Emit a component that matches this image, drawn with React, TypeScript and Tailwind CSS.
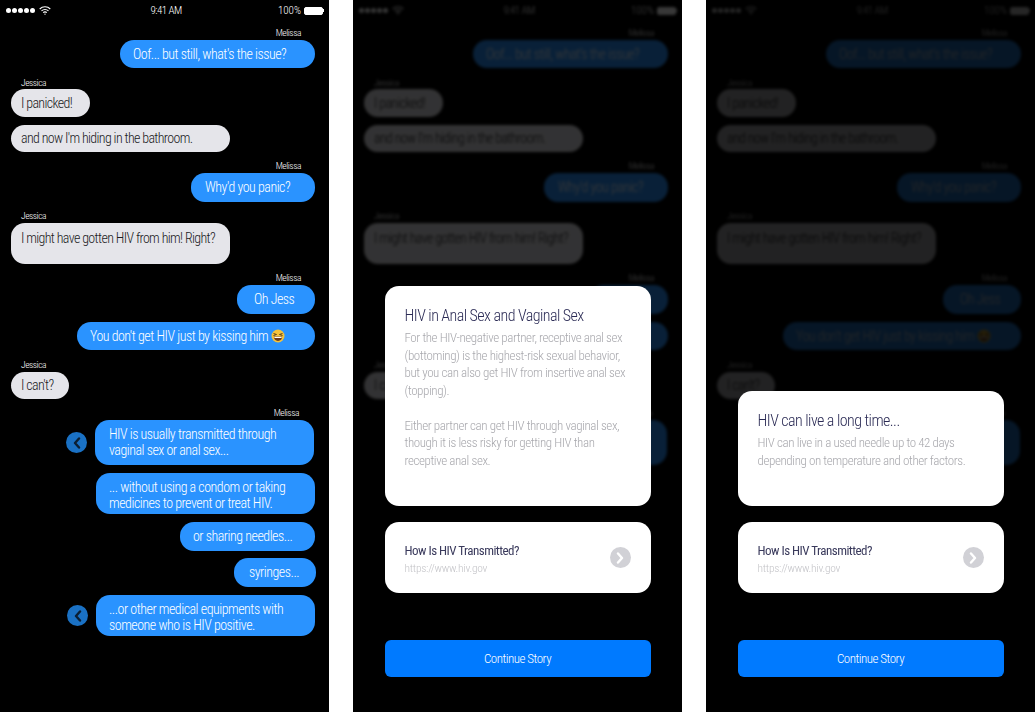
import React from "react";

const font = "font-['Liberation_Sans_Narrow','Roboto_Condensed','Liberation_Sans',sans-serif]";

function Laugh() {
  return (
    <svg width="14" height="14" viewBox="0 0 14 14" className="inline-block ml-[3px] shrink-0">
      <circle cx="7" cy="7" r="6.5" fill="#f5c33b" />
      <path d="M2.5 4.5l3 1-3 1M11.5 4.5l-3 1 3 1" stroke="#5a3d1a" strokeWidth="1" fill="none" />
      <path d="M2.8 7.6h8.4c0 2.8-1.8 4.4-4.2 4.4S2.8 10.400 2.800 7.600z" fill="#6b3a1e" />
      <path d="M3.400 7.800h7.200v1.200H3.400z" fill="#fff" />
    </svg>
  );
}

function Chevron({ dir, bg }: { dir: "left" | "right"; bg: string }) {
  return (
    <div className={`w-[21px] h-[21px] rounded-full flex items-center justify-center ${bg}`}>
      <svg width="10" height="12" viewBox="0 0 10 12" fill="none">
        <path
          d={dir === "left" ? "M7 1.500L3 6l4 4.500" : "M3 1.500L7 6l-4 4.500"}
          stroke={dir === "left" ? "#0b1f33" : "#ffffff"}
          strokeWidth="2.400"
          strokeLinecap="round"
          strokeLinejoin="round"
        />
      </svg>
    </div>
  );
}

function StatusBar() {
  return (
    <div className="h-[18px] pt-[3px] px-[6px] flex items-center justify-between text-white text-[11px] font-light">
      <div className="flex items-center w-[110px]">
        <div className="flex gap-[1px]">
          {[0, 1, 2, 3, 4].map((i) => (
            <span key={i} className="w-[5px] h-[5px] rounded-full bg-white" />
          ))}
        </div>
        <svg width="12" height="9" viewBox="0 0 12 9" className="ml-[4px] mb-[1px]" fill="none" stroke="#fff" strokeWidth="1.100">
          <path d="M.7 3A7.500 7.500 0 0 1 11.300 3M2.500 4.900a5 5 0 0 1 7 0M4.200 6.600a2.500 2.500 0 0 1 3.600 0" />
          <path d="M6 8.900l1-1.200H5z" fill="#fff" stroke="none" />
        </svg>
      </div>
      <span className="pl-[3px] pt-[1px] tracking-[-0.55px]">9:41 AM</span>
      <div className="flex items-center justify-end w-[110px]">
        <span className="pt-[1px]">100%</span>
        <div className="ml-[3px] w-[19px] h-[8px] border border-white rounded-[2px] bg-white" />
        <div className="w-[1px] h-[3px] bg-white mr-[-1px]" />
      </div>
    </div>
  );
}

const blue = "bg-[#2a93ff] text-white";
const gray = "bg-[#e5e5ea] text-[#1c1c1e] tracking-[-0.65px]";

function Chat({ short }: { short?: boolean }) {
  return (
    <div className="flex flex-col text-[14px] font-light tracking-[-0.5px] whitespace-nowrap">
      <Name who="Melissa" cls="mt-[9px] mr-[28px] self-end" />
      <div className={`mt-[1px] self-end mr-[14px] w-[195px] h-[28px] pl-[13px] rounded-[14px] flex items-center ${blue}`}>Oof... but still, what's the issue?</div>

      <Name who="Jessica" cls="mt-[9px] ml-[21px]" />
      <div className={`ml-[11px] w-[79px] h-[28px] pl-[10px] rounded-[14px] flex items-center ${gray}`}>I panicked!</div>
      <div className={`mt-[8px] ml-[11px] w-[219px] h-[27px] pl-[10px] rounded-[14px] flex items-center ${gray}`}>and now I'm hiding in the bathroom.</div>

      <Name who="Melissa" cls="mt-[8px] mr-[28px] self-end" />
      <div className={`mt-[1px] self-end mr-[14px] w-[124px] h-[29px] pl-[14px] rounded-[14px] flex items-center ${blue}`}>Why'd you panic?</div>

      <Name who="Jessica" cls="mt-[8px] ml-[21px]" />
      <div className={`mt-[1px] ml-[11px] w-[219px] h-[41px] pl-[10px] pt-[5px] rounded-[14px] ${gray}`}>I might have gotten HIV from him! Right?</div>

      <Name who="Melissa" cls="mt-[8px] mr-[28px] self-end" />
      <div className={`mt-[1px] self-end mr-[14px] w-[78px] h-[29px] pl-[17px] rounded-[14px] flex items-center ${blue}`}>Oh Jess</div>
      <div className={`mt-[8px] self-end mr-[14px] w-[238px] h-[28px] pl-[13px] rounded-[14px] flex items-center ${blue}`}>You don't get HIV just by kissing him<Laugh /></div>

      <Name who="Jessica" cls="mt-[9px] ml-[21px]" />
      <div className={`mt-[1px] ml-[11px] w-[58px] h-[27px] pl-[10px] rounded-[14px] flex items-center ${gray}`}>I can't?</div>

      <Name who="Melissa" cls="mt-[8px] mr-[30px] self-end" />
      <div className="mt-[1px] self-end mr-[15px] flex items-center gap-[8px]">
        <Chevron dir="left" bg="bg-[#1a71c4]" />
        <div className={`w-[219px] h-[45px] pl-[14px] pt-[6px] leading-[16px] rounded-[14px] ${blue}`}>HIV is usually transmitted through<br />vaginal sex or anal sex...</div>
      </div>
      {!short && (
        <>
          <div className={`mt-[8px] self-end mr-[14px] w-[219px] h-[41px] pl-[13px] pt-[6px] leading-[16px] rounded-[14px] ${blue}`}>... without using a condom or taking<br />medicines to prevent or treat HIV.</div>
          <div className={`mt-[8px] self-end mr-[14px] w-[135px] h-[29px] pl-[13px] rounded-[14px] flex items-center ${blue}`}>or sharing needles...</div>
          <div className={`mt-[7px] self-end mr-[13px] w-[82px] h-[29px] pl-[15px] rounded-[14px] flex items-center ${blue}`}>syringes...</div>
          <div className="mt-[8px] self-end mr-[14px] flex items-center gap-[8px]">
            <Chevron dir="left" bg="bg-[#1a71c4]" />
            <div className={`w-[219px] h-[41px] pl-[13px] pt-[6px] leading-[16px] rounded-[14px] ${blue}`}>...or other medical equipments with<br />someone who is HIV positive.</div>
          </div>
        </>
      )}
    </div>
  );
}

function Name({ who, cls }: { who: string; cls: string }) {
  return <div className={`h-[12px] leading-[12px] text-[9.500px] tracking-[-0.45px] text-white ${cls}`}>{who}</div>;
}

function Overlay({ title, lines, cardH, gapTop }: { title: string; lines: React.ReactNode; cardH: string; gapTop: string }) {
  return (
    <div className={`absolute inset-0 flex flex-col items-center whitespace-nowrap ${gapTop}`}>
      <div className={`w-[266px] ${cardH} bg-white rounded-[14px] px-[20px] pt-[20px]`}>
        <div className="text-[16px] leading-[20px] font-light tracking-[-0.55px] text-[#2b2b55]">{title}</div>
        <div className="mt-[3px] text-[13px] leading-[17.500px] font-light tracking-[-0.4px] text-[#a8a8ad]">{lines}</div>
      </div>
      <div className="mt-[16px] w-[266px] h-[71px] bg-white rounded-[14px] pl-[20px] pr-[20px] flex items-center justify-between">
        <div className="pt-[3px]">
          <div className="text-[13px] leading-[18px] tracking-[-0.52px] text-[#3a3a5c]">How Is HIV Transmitted?</div>
          <div className="text-[11.500px] leading-[17px] font-light tracking-[-0.27px] text-[#c4c4c8]">https://www.hiv.gov</div>
        </div>
        <Chevron dir="right" bg="bg-[#d1d1d6]" />
      </div>
      <div className="mt-[47px] w-[266px] h-[37px] pt-[1px] bg-[#007aff] rounded-[6px] flex items-center justify-center font-light text-white text-[13px] tracking-[-0.5px]">Continue Story</div>
    </div>
  );
}

function Dim({ cls }: { cls: string }) {
  return (
    <div className={`blur-[1.500px] ${cls}`}>
      <StatusBar />
      <Chat short />
    </div>
  );
}

export default function App() {
  return (
    <div className={`w-[1035px] h-[712px] bg-white flex justify-between overflow-hidden ${font}`}>
      <div className="w-[329px] h-[712px] bg-black">
        <StatusBar />
        <Chat />
      </div>
      <div className="relative w-[329px] h-[712px] bg-black overflow-hidden">
        <Dim cls="opacity-[0.22]" />
        <Overlay
          gapTop="pt-[286px]"
          cardH="h-[220px]"
          title="HIV in Anal Sex and Vaginal Sex"
          lines={
            <>
              For the HIV-negative partner, receptive anal sex<br />
              (bottoming) is the highest-risk sexual behavior,<br />
              but you can also get HIV from insertive anal sex<br />
              (topping).<br />
              <br />
              Either partner can get HIV through vaginal sex,<br />
              though it is less risky for getting HIV than<br />
              receptive anal sex.
            </>
          }
        />
      </div>
      <div className="relative w-[329px] h-[712px] bg-black overflow-hidden">
        <Dim cls="opacity-[0.15]" />
        <Overlay
          gapTop="pt-[391px]"
          cardH="h-[115px]"
          title="HIV can live a long time..."
          lines={
            <>
              HIV can live in a used needle up to 42 days<br />
              depending on temperature and other factors.
            </>
          }
        />
      </div>
    </div>
  );
}
